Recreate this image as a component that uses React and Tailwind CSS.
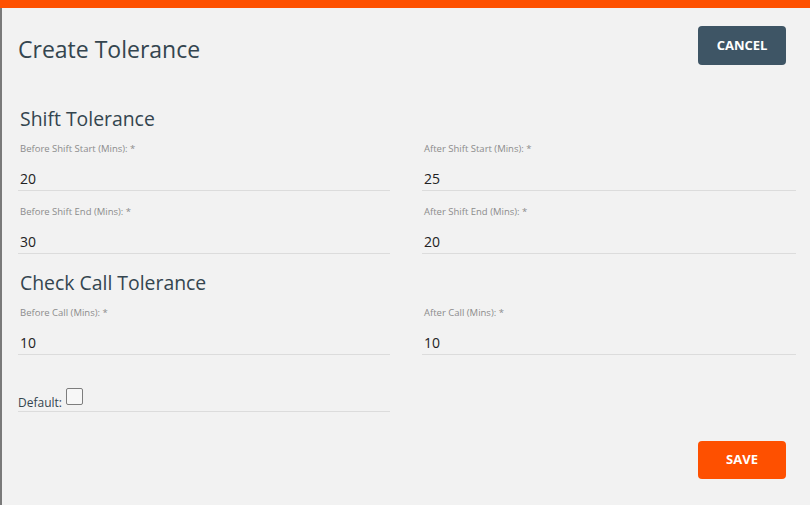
import React from 'react';

const Field = ({ label, value }) => (
    <div>
        <div className="pl-[2px] pt-[1px] text-[9.5px] leading-[14px] text-[#8c8c8c]">{label}</div>
        <div className="h-[35px] flex items-end pl-[2px] pb-[1px] border-b border-[#dcdcdc] text-[14px] leading-[20px] text-[#222]">
            {value}
        </div>
    </div>
);

const App = () => {
    return (
        <div className="w-[810px] h-[505px] flex flex-col bg-[#f2f2f2] overflow-hidden" style={{ fontFamily: '"Open Sans", sans-serif' }}>
            {/* top bar */}
            <div className="h-[8px] bg-[#fe5000] shrink-0" />
            <div className="flex flex-1">
                <div className="w-[2px] bg-[#7a7a7a] shrink-0" />
                <div className="flex-1 bg-[#f2f2f2] pl-[16px] pr-[14px]">
                    {/* Header */}
                    <div className="flex items-start justify-between pt-[18px] pr-[10px]">
                        <h1 className="mt-[7px] text-[23px] leading-[32px] text-[#34454f]">Create Tolerance</h1>
                        <button className="w-[88px] h-[39px] rounded-[4px] bg-[#3e5565] text-white text-[13px] font-bold">
                            CANCEL
                        </button>
                    </div>

                    <h2 className="mt-[41px] pl-[2px] text-[19.4px] leading-[26px] text-[#34454f]">Shift Tolerance</h2>
                    <div className="mt-[9px] grid grid-cols-[372px_374px] gap-x-[32px] gap-y-[13px]">
                        <Field label="Before Shift Start (Mins): *" value="20" />
                        <Field label="After Shift Start (Mins): *" value="25" />
                        <Field label="Before Shift End (Mins): *" value="30" />
                        <Field label="After Shift End (Mins): *" value="20" />
                    </div>

                    <h2 className="mt-[16px] pl-[2px] text-[19.4px] leading-[26px] text-[#34454f]">Check Call Tolerance</h2>
                    <div className="mt-[9px] grid grid-cols-[372px_374px] gap-x-[32px]">
                        <Field label="Before Call (Mins): *" value="10" />
                        <Field label="After Call (Mins): *" value="10" />
                        <div className="h-[57px] flex items-end border-b border-[#dcdcdc]">
                            <span className="text-[12px] leading-[16px] text-[#34454f]">Default:</span>
                            <span className="ml-[4px] mb-[6px] w-[17px] h-[17px] rounded-[2px] border border-[#7d7d7d] bg-[#f7f7f7]" />
                        </div>
                    </div>

                    <div className="mt-[29px] flex justify-end pr-[10px]">
                        <button className="w-[88px] h-[38px] rounded-[4px] bg-[#fe5000] text-white text-[13px] font-bold">
                            SAVE
                        </button>
                    </div>
                </div>
            </div>
        </div>
    );
};

export default App;
